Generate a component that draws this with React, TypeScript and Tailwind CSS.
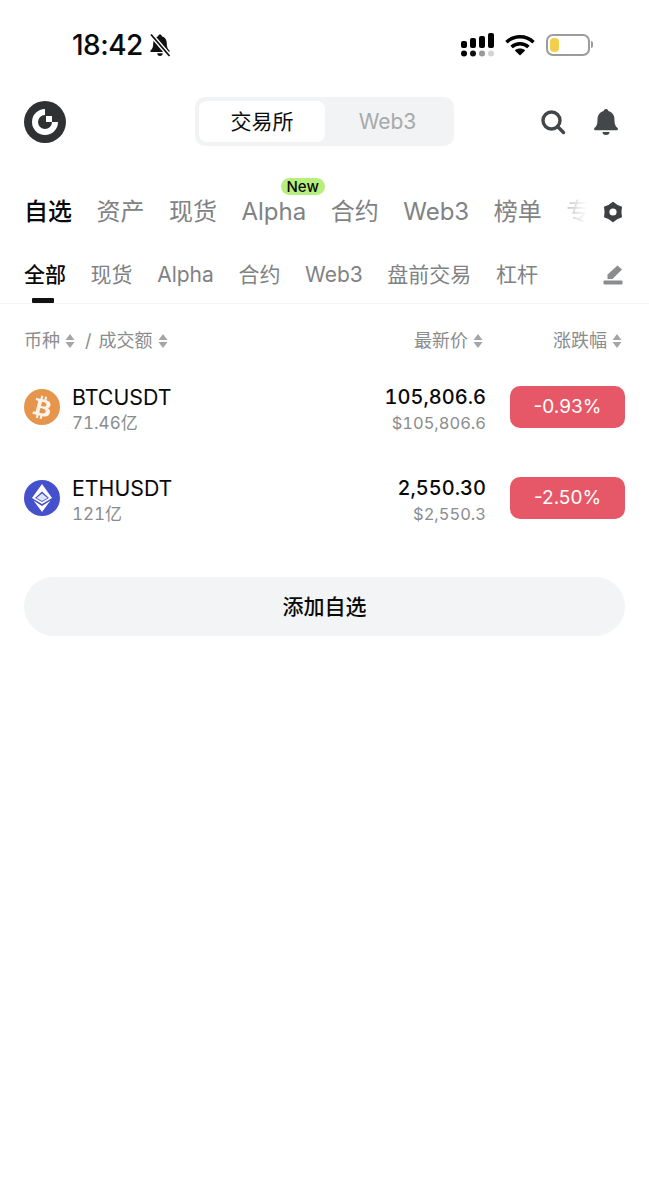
import { FaBtc } from "react-icons/fa";

const mainTabs = ["资产", "现货", "Alpha", "合约", "Web3", "榜单"];
const subTabs = ["现货", "Alpha", "合约", "Web3", "盘前交易", "杠杆"];

const coins = [
  { symbol: "BTCUSDT", volume: "71.46亿", price: "105,806.6", usd: "$105,806.6", change: "-0.93%" },
  { symbol: "ETHUSDT", volume: "121亿", price: "2,550.30", usd: "$2,550.3", change: "-2.50%" },
];

const SortIcon = () => (
  <svg width="10" height="16" viewBox="0 0 10 16" className="shrink-0" fill="#a3a5a8">
    <path d="M5 1 9.500 7H.5zM5 15 .5 9h9z" />
  </svg>
);

const SignalIcon = () => (
  <svg width="33" height="24" viewBox="0 0 33 24">
    <rect x="0" y="8" width="6" height="7" rx="2" fill="#000" />
    <rect x="9" y="5" width="6" height="10" rx="2" fill="#000" />
    <rect x="18" y="3" width="6" height="12" rx="2" fill="#000" />
    <rect x="27" y="0" width="6" height="15" rx="2" fill="#000" />
    <circle cx="3" cy="20.500" r="3" fill="#000" />
    <circle cx="12" cy="20.500" r="3" fill="#111" />
    <circle cx="21" cy="20.500" r="3" fill="#999" />
    <circle cx="30" cy="20.500" r="3" fill="#d4d4d4" />
  </svg>
);

const WifiIcon = () => (
  <svg width="30" height="22" viewBox="0 0 30 22" fill="none" stroke="#000" strokeWidth="3.600">
    <path d="M1.500 8.200C9 1 21 1 28.500 8.200" />
    <path d="M6.600 13C11.400 8.600 18.600 8.600 23.400 13" />
    <path d="M15 21.500 9.800 16.400C12.800 13.900 17.200 13.900 20.200 16.400Z" fill="#000" stroke="none" />
  </svg>
);

const Battery = () => (
  <div className="flex items-center">
    <div className="flex h-[22px] w-[44px] items-center rounded-[7px] border-2 border-[#9c9c9c] p-[2px]">
      <div className="h-[14px] w-[9px] rounded-[4px] bg-[#f2cf4a]" />
    </div>
    <div className="ml-[1px] h-[7px] w-[2px] rounded-r-sm bg-[#9c9c9c]" />
  </div>
);

const MutedBell = () => (
  <svg width="24" height="24" viewBox="0 0 24 24" className="ml-[5px]">
    <path d="M12 1.500c1 0 1.700.7 1.800 1.700 3.300.9 5 3.600 5 7.200 0 3.600.8 5.200 2.700 7v1.600h-19V17.400c1.900-1.800 2.700-3.400 2.700-7 0-3.600 1.700-6.300 5-7.200.1-1 .8-1.700 1.800-1.700ZM9.300 20.300h5.400a2.700 2.700 0 0 1-5.400 0Z" fill="#111" />
    <path d="M3 1.500 21.500 23" stroke="#fff" strokeWidth="4.500" />
    <path d="M3 1.500 21.500 23" stroke="#111" strokeWidth="1.800" />
  </svg>
);

const Logo = () => (
  <svg width="42" height="42" viewBox="0 0 42 42">
    <circle cx="21" cy="21" r="21" fill="#2f3133" />
    <path d="M21 8A13 13 0 1 0 34 21H28A7 7 0 1 1 21 14Z" fill="#fff" />
    <rect x="22" y="15" width="6" height="6" fill="#fff" />
  </svg>
);

const SearchIcon = () => (
  <svg width="26" height="26" viewBox="0 0 26 26" fill="none" stroke="#44474a" strokeWidth="3.400">
    <circle cx="11.500" cy="11.500" r="8.500" />
    <path d="m17.500 17.500 6 6" strokeLinecap="round" />
  </svg>
);

const BellIcon = () => (
  <svg width="24" height="26" viewBox="0 0 24 26" fill="#44474a">
    <path d="M12 0c1.300 0 2.200.9 2.300 2.100C18.600 3.200 20.500 6.700 20.500 11c0 4 .8 6 2.800 7.800.5.500.7.900.7 1.300 0 .7-.5 1.200-1.300 1.200H1.300C.5 21.300 0 20.800 0 20.100c0-.4.200-.8.700-1.300C2.700 17 3.500 15 3.500 11c0-4.300 1.900-7.800 6.200-8.900C9.800.9 10.700 0 12 0Z" />
    <path d="M8.500 23h7a3.500 3 0 0 1-7 0Z" />
  </svg>
);

const GearIcon = () => (
  <svg width="20" height="22" viewBox="0 0 20 22">
    <path
      fill="#3d4043"
      stroke="#3d4043"
      strokeWidth="1.500"
      strokeLinejoin="round"
      d="M10 1.500 13.800 4.400 18.200 6.300 17.700 11 18.200 15.700 13.800 17.600 10 20.500 6.200 17.600 1.800 15.700 2.300 11 1.800 6.300 6.200 4.400Z"
    />
    <circle cx="10" cy="11" r="3.600" fill="#fff" />
  </svg>
);

const EditIcon = () => (
  <svg width="20" height="20" viewBox="0 0 20 20" fill="#8a8c8e">
    <path d="M14.500.5 19 4.500 9.500 14H4.500V9.500Z" />
    <rect x="0.500" y="15.500" width="19" height="4" rx="1" />
  </svg>
);

const BtcIcon = () => (
  <div className="flex size-9 shrink-0 items-center justify-center rounded-full bg-[#e5964c]">
    <FaBtc className="size-[23px] rotate-[14deg] text-[#fdf3e8]" />
  </div>
);

const EthIcon = () => (
  <div className="flex size-9 shrink-0 items-center justify-center rounded-full bg-[#4450cc]">
    <svg width="20" height="28" viewBox="0 0 20 28">
      <path d="M10 0 20 14 10 20 0 14Z" fill="#fff" />
      <path d="M10 7.500 17 14 10 18 3 14Z" fill="#4450cc" />
      <path d="M10 9.500 15.500 14 10 17 4.500 14Z" fill="#dfe2fa" />
      <path d="M1.500 16.500 10 22 18.500 16.500 10 28Z" fill="#fff" />
    </svg>
  </div>
);

export default function App() {
  return (
    <div
      className="h-[1200px] w-[649px] overflow-hidden bg-white"
      style={{ fontFamily: '"Inter", "Noto Sans CJK SC", sans-serif' }}
    >
      {/* status bar */}
      <div className="flex h-[89px] items-center justify-between pl-[72px] pr-[56px]">
        <div className="flex items-center">
          <span className="text-[28px] font-medium leading-none tracking-[-0.5px] text-[#0a0a0a]">18:42</span>
          <MutedBell />
        </div>
        <div className="flex items-center gap-[11px]">
          <SignalIcon />
          <WifiIcon />
          <Battery />
        </div>
      </div>

      {/* header */}
      <div className="flex h-[60px] items-start px-[24px] pt-[12px]">
        <div className="flex-1">
          <Logo />
        </div>
        <div className="-mt-[4px] flex h-[49px] w-[259px] rounded-[10px] bg-[#f1f3f4] p-[4px]">
          <div className="flex w-[126px] items-center justify-center rounded-[8px] bg-white pt-[1px] text-[21px] text-[#0a0a0a]">
            交易所
          </div>
          <div className="flex flex-1 items-center justify-center pt-[1px] text-[21px] text-[#a7a9ab]">Web3</div>
        </div>
        <div className="flex flex-1 justify-end">
          <div className="mr-[7px] mt-[8px] flex items-center gap-[28px]">
            <SearchIcon />
            <BellIcon />
          </div>
        </div>
      </div>

      {/* main tabs */}
      <div className="relative mt-[28px] flex h-[70px] items-center overflow-hidden pl-[24px]">
        <div className="flex shrink-0 items-center gap-[24.500px] text-[24px] text-[#808284]">
          <span className="font-medium text-[#0a0a0a]">自选</span>
          {mainTabs.map((t) => (
            <span key={t} className="relative whitespace-nowrap">
              {t}
              {t === "Alpha" && (
                <span className="absolute -top-[16px] left-[39px] rounded-full bg-[#b7ee7c] px-[6px] text-[15px] font-medium leading-[17px] text-[#0a0a0a]">
                  New
                </span>
              )}
            </span>
          ))}
          <span>专题</span>
        </div>
        <div className="absolute bottom-0 right-0 top-0 flex w-[89px] items-center justify-end bg-gradient-to-r from-white/40 to-white to-[30%] pr-[26px]">
          <GearIcon />
        </div>
      </div>

      {/* sub tabs */}
      <div className="mt-[14px] h-[43px] border-b border-[#f3f4f5]">
        <div className="flex items-start justify-between pl-[24px] pr-[26px]">
          <div className="flex gap-[24.600px] text-[21px] leading-[28px] text-[#808284]">
            <div className="relative font-medium text-[#0a0a0a]">
              全部
              <div className="absolute left-[8px] top-[37px] h-[5px] w-[22px] rounded-[1px] bg-[#111]" />
            </div>
            {subTabs.map((t) => (
              <span key={t} className="whitespace-nowrap">
                {t}
              </span>
            ))}
          </div>
          <div className="pt-[4px]">
            <EditIcon />
          </div>
        </div>
      </div>

      {/* list header */}
      <div className="mt-[24px] flex items-center justify-between pl-[24px] pr-[27px] text-[18px] leading-[26px] text-[#8a8c8e]">
        <div className="flex items-center gap-[5px]">
          <span>币种</span>
          <SortIcon />
          <span className="ml-[5px]">/</span>
          <span className="ml-[2px]">成交额</span>
          <SortIcon />
        </div>
        <div className="flex items-center">
          <div className="flex items-center gap-[5px]">
            <span>最新价</span>
            <SortIcon />
          </div>
          <div className="ml-[70px] flex items-center gap-[5px]">
            <span>涨跌幅</span>
            <SortIcon />
          </div>
        </div>
      </div>

      {/* coin rows */}
      <div className="mt-[32px] flex flex-col gap-[49px] px-[24px]">
        {coins.map((c) => (
          <div key={c.symbol} className="flex h-[42px] items-center">
            {c.symbol === "BTCUSDT" ? <BtcIcon /> : <EthIcon />}
            <div className="ml-[12px] flex flex-col gap-[1px] pt-[5px]">
              <span className="text-[21.300px] leading-[26px] text-[#0a0a0a]">{c.symbol}</span>
              <span className="text-[17px] leading-[24px] tabular-nums text-[#8a8c8e]">{c.volume}</span>
            </div>
            <div className="ml-auto flex flex-col items-end gap-[1px] pt-[5px]">
              <span className="text-[20px] font-medium leading-[26px] tabular-nums text-[#0a0a0a]">{c.price}</span>
              <span className="text-[16.500px] leading-[24px] tabular-nums text-[#8a8c8e]">{c.usd}</span>
            </div>
            <div className="ml-[24px] flex h-[42px] w-[115px] items-center justify-center rounded-[10px] bg-[#e65868] pt-[1px] text-[19px] text-white">
              {c.change}
            </div>
          </div>
        ))}
      </div>

      {/* add button */}
      <div className="mx-[24px] mt-[58px] flex h-[59px] items-center justify-center rounded-full bg-[#f2f4f5] text-[21px] font-medium text-[#0a0a0a]">
        添加自选
      </div>
    </div>
  );
}
